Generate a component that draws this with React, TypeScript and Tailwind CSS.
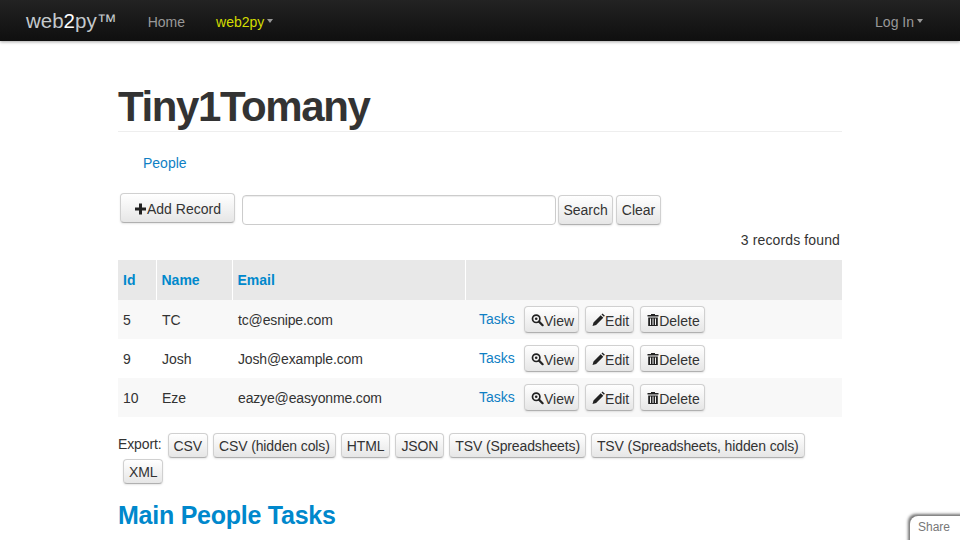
import type { ReactNode } from 'react';

const btn =
  'inline-flex items-center rounded-[4px] border border-[#d0d0d0] border-b-[#b0b0b0] bg-gradient-to-b from-white to-[#e6e6e6] text-[#333] shadow-[0_1px_2px_rgba(0,0,0,0.1)] text-[14px] leading-[20px]';

function Caret() {
  return <span className="ml-[3px] mt-[-3px] inline-block h-0 w-0 border-x-[3.5px] border-t-[4px] border-x-transparent border-t-[#999]" />;
}

function PlusIcon() {
  return (
    <svg width="13" height="14" viewBox="0 0 13 14" className="shrink-0">
      <path d="M5 1.5h3v4h4v3H8v4H5v-4H1v-3h4z" fill="#222" />
    </svg>
  );
}

function ZoomIcon() {
  return (
    <svg width="13" height="14" viewBox="0 0 13 14" className="shrink-0">
      <circle cx="5.2" cy="5.8" r="3.7" fill="none" stroke="#222" strokeWidth="1.7" />
      <circle cx="5.2" cy="5.8" r="1.3" fill="#222" />
      <path d="M8 8.6l3.6 3.6" stroke="#222" strokeWidth="2.2" strokeLinecap="round" />
    </svg>
  );
}

function PencilIcon() {
  return (
    <svg width="13" height="14" viewBox="0 0 13 14" className="shrink-0">
      <path d="M0.5 13l1-3.6 7.2-7.2 2.6 2.6-7.2 7.2zM9.5 1.4l1-1 2.4 2.4-1 1z" fill="#222" />
    </svg>
  );
}

function TrashIcon() {
  return (
    <svg width="12" height="14" viewBox="0 0 12 14" className="shrink-0">
      <path d="M4 1h4v1h3.5v1.5H.5V2H4z" fill="#222" />
      <path d="M1.2 4.5h9.6V13H1.2zM3 5.5v6.5h1V5.5zM5.5 5.5v6.5h1V5.5zM8 5.5v6.5h1V5.5z" fill="#222" fillRule="evenodd" />
    </svg>
  );
}

function Action({ icon, label }: { icon: ReactNode; label: string }) {
  return (
    <button className={`${btn} h-[27px] pl-[6px] pr-[4px]`}>
      {icon}
      <span className="pt-[2px]">{label}</span>
    </button>
  );
}

const rows = [
  { id: '5', name: 'TC', email: 'tc@esnipe.com' },
  { id: '9', name: 'Josh', email: 'Josh@example.com' },
  { id: '10', name: 'Eze', email: 'eazye@easyonme.com' },
];

const exportsList = ['CSV', 'CSV (hidden cols)', 'HTML', 'JSON', 'TSV (Spreadsheets)', 'TSV (Spreadsheets, hidden cols)'];

export default function App() {
  return (
    <div className="relative h-[540px] overflow-hidden bg-white font-['Liberation_Sans',Arial,sans-serif] text-[14px] text-[#333]">
      {/* navbar */}
      <nav className="flex h-[41px] items-center justify-between bg-gradient-to-b from-[#232323] to-[#0f0f0f] pl-[26px] pr-[37px] pt-[3px] shadow-[0_1px_3px_rgba(0,0,0,0.35)]">
        <div className="flex items-center">
          <a className="mt-[-2px] flex items-start text-[20.5px] leading-[24px] text-[#c4c9cc]">
            web<span className="text-white">2</span>py<span className="text-[20px]">™</span>
          </a>
          <a className="ml-[31px] text-[#999]">Home</a>
          <a className="ml-[31px] flex items-center text-[#d4dc00]">
            web2py
            <Caret />
          </a>
        </div>
        <a className="flex items-center text-[#999]">
          Log In
          <Caret />
        </a>
      </nav>

      <main className="mx-auto w-[724px]">
        <h1 className="mt-[43px] border-b border-[#eeeeee] pb-[1px] text-[42px] font-bold leading-[46px] tracking-[-1.4px] text-[#333]">
          Tiny1Tomany
        </h1>

        <div className="mt-[21px] pl-[25px] leading-[20px] text-[#0f7fc4]">People</div>

        <div className="mt-[20px] flex items-start pl-[2px]">
          <button className={`${btn} h-[30px] pl-[13px] pr-[13px] pt-[1px]`}>
            <PlusIcon />
            <span>Add Record</span>
          </button>
          <input className="ml-[7px] mt-[2px] h-[30px] w-[314px] rounded-[4px] border border-[#cccccc] bg-white shadow-[inset_0_1px_1px_rgba(0,0,0,0.075)]" />
          <button className={`${btn} ml-[2px] mt-[2px] h-[30px] px-[4.5px]`}>Search</button>
          <button className={`${btn} ml-[3px] mt-[2px] h-[30px] px-[4.5px]`}>Clear</button>
        </div>

        <div className="mt-[5px] pr-[2px] text-right leading-[20px] tracking-[0.13px]">3 records found</div>

        <table className="mt-[10px] w-[724px] table-fixed border-collapse">
          <colgroup>
            <col className="w-[38px]" />
            <col className="w-[76px]" />
            <col className="w-[233px]" />
            <col />
          </colgroup>
          <thead>
            <tr className="h-[40px] bg-[#e8e8e8] text-left font-bold text-[#0088cc]">
              <th className="border-r border-white pl-[5px]">Id</th>
              <th className="border-r border-white pl-[5px]">Name</th>
              <th className="border-r border-white pl-[5px]">Email</th>
              <th />
            </tr>
          </thead>
          <tbody>
            {rows.map((r, i) => (
              <tr key={r.id} className={`h-[39px] ${i % 2 === 0 ? 'bg-[#f8f8f8]' : 'bg-white'}`}>
                <td className="pl-[5px] pt-[2px]">{r.id}</td>
                <td className="pl-[6px] pt-[2px]">{r.name}</td>
                <td className="pl-[6px] pt-[2px] tracking-[-0.15px]">{r.email}</td>
                <td className="pl-[14px]">
                  <div className="flex items-center">
                    <a className="w-[45px] text-[#0f7fc4]">Tasks</a>
                    <div className="flex gap-[6px]">
                      <Action icon={<ZoomIcon />} label="View" />
                      <Action icon={<PencilIcon />} label="Edit" />
                      <Action icon={<TrashIcon />} label="Delete" />
                    </div>
                  </div>
                </td>
              </tr>
            ))}
          </tbody>
        </table>

        <div className="mt-[16px] flex flex-wrap gap-x-[5px] gap-y-[1px] tracking-[-0.12px]">
          <span className="mr-[1px] leading-[22px]">Export:</span>
          {exportsList.map((e) => (
            <button key={e} className={`${btn} h-[25px] px-[5px]`}>
              {e}
            </button>
          ))}
          <button className={`${btn} ml-[5px] h-[25px] px-[5px]`}>XML</button>
        </div>

        <h2 className="mt-[13px] text-[25px] font-bold leading-[36px] tracking-[-0.25px] text-[#0088cc]">Main People Tasks</h2>
      </main>

      {/* share tab */}
      <div className="absolute bottom-[-10px] right-[-10px] h-[34px] w-[60px] rounded-tl-[8px] bg-white pl-[8px] pt-[3px] text-[12px] leading-[16px] text-[#777] shadow-[-2px_-2px_3px_rgba(0,0,0,0.55)]">
        Share
      </div>
    </div>
  );
}
